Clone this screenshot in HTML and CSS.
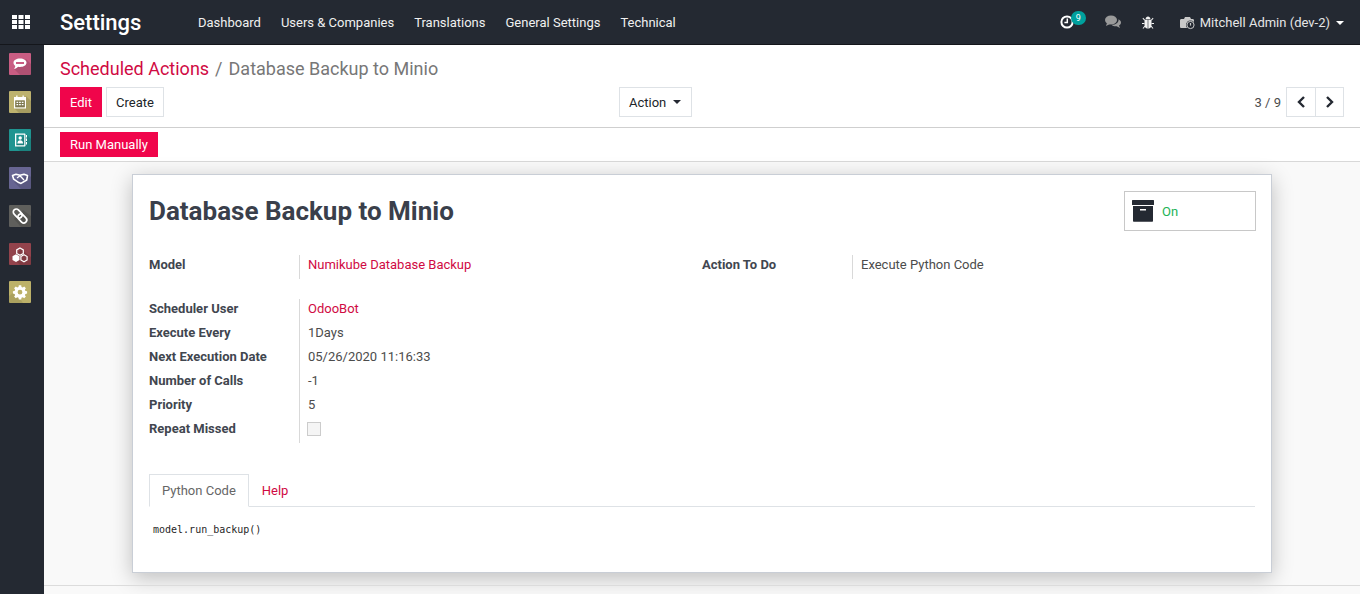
FILE: index.html
```html
<!DOCTYPE html>
<html>
<head>
	<meta charset="utf-8">
	<meta name="viewport" content="width=device-width, initial-scale=1">
	<title>Database Backup to Minio</title>
	<link rel="stylesheet" href="styles.css">
</head>
<body>
	<header class="navbar">
		<a class="apps-btn">
			<svg width="18" height="14" viewBox="0 0 18 14" fill="#fff">
				<rect x="0" y="0" width="5" height="4"/><rect x="6.500" y="0" width="5" height="4"/><rect x="13" y="0" width="5" height="4"/>
				<rect x="0" y="5" width="5" height="4"/><rect x="6.500" y="5" width="5" height="4"/><rect x="13" y="5" width="5" height="4"/>
				<rect x="0" y="10" width="5" height="4"/><rect x="6.500" y="10" width="5" height="4"/><rect x="13" y="10" width="5" height="4"/>
			</svg>
		</a>
		<span class="brand">Settings</span>
		<nav class="menu">
			<a>Dashboard</a>
			<a>Users &amp; Companies</a>
			<a>Translations</a>
			<a>General Settings</a>
			<a>Technical</a>
		</nav>
		<div class="systray">
			<span class="tray-item tray-activity">
				<svg width="14" height="14" viewBox="0 0 14 14" fill="none" stroke="#fff" stroke-width="2"><circle cx="7" cy="7" r="5.600"/><path d="M7.300 3.600V7.600H4.400" stroke-width="1.500"/></svg>
				<span class="badge">9</span>
			</span>
			<span class="tray-item tray-chat">
				<svg width="16" height="14" viewBox="0 0 16 14" fill="#9a9a9a"><ellipse cx="6" cy="5" rx="6" ry="4.600"/><path d="M2 8l-1 3 4-2z"/><path d="M13.500 4.200c1.600.8 2.500 2 2.500 3.300 0 1.300-.8 2.400-2 3.100l1 2.400-3.400-1.700c-2 .2-4-.4-5-1.500 3.800.1 7.400-2 6.900-5.600z"/></svg>
			</span>
			<span class="tray-item tray-debug">
				<svg width="12" height="13" viewBox="0 0 12 13" fill="#f2f2f2"><path d="M3.600 3.200C3.700 1.700 4.700.6 6 .6s2.300 1.100 2.400 2.600z"/><path d="M2.500 3.800h3.200v8.900C3.700 12.500 2.500 11 2.500 9zM6.300 3.800h3.200V9c0 2-1.200 3.500-3.200 3.700z"/><path d="M.5 2.500l.7-.7 1.800 2-.7.7zM11.500 2.500l-.7-.7-1.800 2 .7.7zM0 7h2.500v1H0zM9.500 7H12v1H9.500zM.6 12.200l2-2.400.7.600-2 2.400zM11.400 12.200l-2-2.400-.7.600 2 2.400z"/></svg>
			</span>
			<span class="tray-item tray-user">
				<svg width="16" height="14" viewBox="0 0 16 14"><path fill="#c9c9c9" d="M0 4.500C0 3.500.6 3 1.500 3H4l1-2h5l1 2h1.500c.9 0 1.500.5 1.500 1.500V12H1.500C.6 12 0 11.500 0 10.500z"/><circle cx="10.500" cy="9" r="4.500" fill="#242932"/><circle cx="10.500" cy="9" r="3.600" fill="none" stroke="#c9c9c9"/><path d="M10.500 7v2.600" stroke="#c9c9c9" stroke-width="1.200"/></svg>
				Mitchell Admin (dev-2)
				<i class="caret caret-light"></i>
			</span>
		</div>
	</header>

	<div class="body-wrap">
		<aside class="sidebar">
			<a class="app-icon app-pink">
				<svg viewBox="0 0 22 22"><path class="shade" d="M5 16l12-10 5 5v11H11z"/><path class="glyph" d="M11 5.500c3.600 0 6.500 1.800 6.500 4.200S14.600 13.900 11 13.900c-.7 0-1.300-.1-1.900-.2C8 14.800 6.500 15.700 5 15.800c.8-.8 1.200-1.800 1.300-2.900-1.100-.8-1.800-2-1.800-3.200C4.500 7.300 7.400 5.500 11 5.500z"/><rect x="7" y="9" width="8" height="2" fill="#c95d83"/></svg>
			</a>
			<a class="app-icon app-khaki">
				<svg viewBox="0 0 22 22"><path class="shade" d="M5 17L17 5l5 5v12H10z"/><path class="glyph" d="M5 6h2.200V4.500h1.300V6h5V4.500h1.300V6H17v11.500H5zM6.300 9.500v6.700h9.400V9.500z"/><rect x="6.300" y="9.500" width="9.400" height="6.700" fill="#7d7750"/><path class="glyph" d="M7.500 10.700h1.700v1.300H7.500zM10.100 10.700h1.700v1.300h-1.700zM12.800 10.700h1.700v1.300h-1.700zM7.500 13h1.700v1.300H7.500zM10.100 13h1.700v1.300h-1.700zM12.800 13h1.700v1.300h-1.700z"/></svg>
			</a>
			<a class="app-icon app-teal">
				<svg viewBox="0 0 22 22"><path class="shade" d="M6 17L17 5l5 5v12H11z"/><path class="glyph" d="M6 4.500h9.500c.6 0 1 .4 1 1v11c0 .6-.4 1-1 1H6zM7.300 5.800v10.400h7.900V5.800z"/><path class="glyph" d="M17 6h1v2.500h-1zM17 9.500h1V12h-1zM17 13h1v2.500h-1z"/><circle class="glyph" cx="11.200" cy="9" r="1.700"/><path class="glyph" d="M8.400 14.500c0-2 1.200-3.200 2.800-3.200s2.800 1.200 2.800 3.200z"/></svg>
			</a>
			<a class="app-icon app-purple">
				<svg viewBox="0 0 22 22"><path class="shade" d="M5 15l14-8 3 3v12H12z"/><g fill="none" stroke="#fff" stroke-width="1.600" stroke-linejoin="round"><path d="M3.500 8.500L7 7.300l4 1 4-1 3.500 1.200-.8 4.500-5.700 3.400-2.300-.8-5-3.400z"/><path d="M8 11l3-2.200 4 4.200" stroke-width="1.300"/></g></svg>
			</a>
			<a class="app-icon app-grey">
				<svg viewBox="0 0 22 22"><path class="shade" d="M5 14l9-9 8 6v11H12z"/><g fill="none" stroke="#fff" stroke-width="1.700"><rect x="3.700" y="5.500" width="10" height="6" rx="3" transform="rotate(45 8.700 8.500)"/><rect x="8.300" y="10.500" width="10" height="6" rx="3" transform="rotate(45 13.300 13.500)"/></g></svg>
			</a>
			<a class="app-icon app-red">
				<svg viewBox="0 0 22 22"><path class="shade" d="M4 15l8-9 10 8v8H11z"/><path d="M11 5l3.300 1.900v3.500L11 12.300 7.700 10.400V6.900z" fill="none" stroke="#fff" stroke-width="1.200"/><path class="glyph" d="M7 11.300l3.500 2v3.700L7 19l-3.500-2v-3.700z"/><path d="M15 11.800l3.100 1.800v3.300L15 18.700l-3.100-1.800v-3.300z" fill="none" stroke="#fff" stroke-width="1.200"/></svg>
			</a>
			<a class="app-icon app-olive">
				<svg viewBox="0 0 22 22"><path class="shade" d="M0 22V15L6 10l8 12z" opacity=".7"/><path class="glyph" fill-rule="evenodd" d="M9.800 4.800h2.400l.3 1.700 1.300.5 1.400-1 1.700 1.700-1 1.400.5 1.300 1.700.3v2.400l-1.700.3-.5 1.300 1 1.400-1.700 1.700-1.400-1-1.300.5-.3 1.700H9.800l-.3-1.700-1.300-.5-1.400 1-1.700-1.700 1-1.400-.5-1.300-1.700-.3v-2.400l1.700-.3.5-1.300-1-1.400 1.700-1.700 1.400 1 1.300-.5zM11 9.300a2.400 2.400 0 1 0 0 4.800 2.400 2.400 0 0 0 0-4.800z" transform="translate(0 -.5)"/></svg>
			</a>
		</aside>

		<main class="content">
			<section class="control-panel">
				<div class="breadcrumb">
					<a>Scheduled Actions</a><span class="crumb-sep">/</span><span class="crumb-current">Database Backup to Minio</span>
				</div>
				<div class="cp-row">
					<div class="cp-buttons">
						<button class="btn btn-primary">Edit</button>
						<button class="btn btn-light">Create</button>
					</div>
					<div class="cp-action">
						<button class="btn btn-light btn-action">Action <i class="caret caret-dark"></i></button>
					</div>
					<div class="cp-pager">
						<span class="pager-value">3 / 9</span>
						<div class="pager-btns">
							<button class="btn btn-light btn-pager"><svg width="10" height="12" viewBox="0 0 10 12"><path d="M8 1L3 6l5 5" fill="none" stroke="#242932" stroke-width="2.400"/></svg></button>
							<button class="btn btn-light btn-pager"><svg width="10" height="12" viewBox="0 0 10 12"><path d="M2 1l5 5-5 5" fill="none" stroke="#242932" stroke-width="2.400"/></svg></button>
						</div>
					</div>
				</div>
			</section>

			<div class="statusbar">
				<button class="btn btn-primary btn-small">Run Manually</button>
			</div>

			<div class="form-view">
				<div class="sheet">
					<div class="sheet-top">
						<h1 class="title">Database Backup to Minio</h1>
						<button class="toggle-btn">
							<svg width="22" height="22" viewBox="0 0 22 22" fill="#242932"><rect x="0" y="0" width="22" height="5" rx=".5"/><path d="M1 6h20v15a.7.7 0 0 1-.7.7H1.700A.7.7 0 0 1 1 21zM8 9v1.500h6V9z" fill-rule="evenodd"/></svg>
							<span class="toggle-label">On</span>
						</button>
					</div>

					<div class="field-cols">
						<div class="field-group">
							<div class="lbl">Model</div>
							<div class="val"><a>Numikube Database Backup</a></div>
						</div>
						<div class="field-group">
							<div class="lbl">Action To Do</div>
							<div class="val">Execute Python Code</div>
						</div>
					</div>

					<div class="field-group group-schedule">
						<div class="lbl">Scheduler User</div>
						<div class="val"><a>OdooBot</a></div>
						<div class="lbl">Execute Every</div>
						<div class="val">1Days</div>
						<div class="lbl">Next Execution Date</div>
						<div class="val">05/26/2020 11:16:33</div>
						<div class="lbl">Number of Calls</div>
						<div class="val">-1</div>
						<div class="lbl">Priority</div>
						<div class="val">5</div>
						<div class="lbl">Repeat Missed</div>
						<div class="val"><span class="check"></span></div>
					</div>

					<div class="tabs">
						<a class="tab tab-active">Python Code</a>
						<a class="tab">Help</a>
					</div>
					<pre class="code">model.run_backup()</pre>
				</div>
				<div class="chatter-line"></div>
			</div>
		</main>
	</div>
</body>
</html>
```

FILE: styles.css
```css
* { box-sizing: border-box; }
html, body { height: 100%; }
body {
	margin: 0;
	overflow: hidden;
	display: flex;
	flex-direction: column;
	font-family: Roboto, "Liberation Sans", sans-serif;
	font-size: 13px;
	line-height: 19.5px;
	color: #4c4c4c;
	background: #fff;
}
a { color: #d00a43; text-decoration: none; }

/* top bar */
.navbar {
	flex: none;
	height: 45px;
	display: flex;
	align-items: center;
	background: #242932;
	border-bottom: 1px solid #14161b;
	color: #fff;
}
.apps-btn {
	width: 42px;
	display: flex;
	justify-content: center;
	margin-right: 2px;
}
.brand {
	margin-left: 16px;
	width: 128px;
	padding-top: 2px;
	font-size: 22px;
	font-weight: 500;
	color: #fff;
}
.menu { display: flex; gap: 20px; margin-left: 10px; padding-top: 2px; }
.menu a { color: #f0f0f0; }
.systray {
	margin-left: auto;
	display: flex;
	align-items: center;
	padding-right: 16px;
}
.tray-item { display: flex; align-items: center; color: #e6e6e6; }
.tray-activity { position: relative; width: 14px; margin-right: 31px; }
.badge {
	position: absolute;
	left: 11px;
	top: -4px;
	width: 15px;
	height: 14px;
	border-radius: 7px;
	background: #00a09d;
	color: #fff;
	font-size: 9px;
	line-height: 14px;
	text-align: center;
}
.tray-chat { margin-right: 21px; }
.tray-debug { margin-right: 26px; }
.tray-user { padding-top: 2px; }
.tray-user svg { margin-right: 4px; }

.caret {
	display: inline-block;
	width: 0;
	height: 0;
	border-left: 4px solid transparent;
	border-right: 4px solid transparent;
	border-top: 4px solid #fff;
}
.caret-light { margin-left: 6px; margin-top: -1px; }
.caret-dark { border-top-color: #242932; margin-left: 3px; vertical-align: 3px; }

/* left app column */
.body-wrap { flex: 1; min-height: 0; display: flex; }
.sidebar {
	flex: none;
	width: 44px;
	background: #242932;
	display: flex;
	flex-direction: column;
	align-items: flex-start;
	gap: 16px;
	padding: 8px 0 0 9px;
}
.app-icon { display: block; width: 22px; height: 22px; border-radius: 1px; overflow: hidden; }
.app-icon svg { display: block; width: 22px; height: 22px; }
.glyph { fill: #fff; }
.shade { fill: rgba(0, 0, 0, .12); }
.app-pink { background: #c95d83; }
.app-khaki { background: #bdb26e; }
.app-teal { background: #1f9490; }
.app-purple { background: #676592; }
.app-grey { background: #5f5f5c; }
.app-red { background: #93434c; }
.app-olive { background: #bcb169; }

/* main */
.content { flex: 1; min-width: 0; display: flex; flex-direction: column; }
.control-panel {
	flex: none;
	height: 83px;
	padding: 10px 16px 0;
	border-bottom: 1px solid #cfcfcf;
}
.breadcrumb { font-size: 18px; line-height: 27px; height: 32px; color: #777; }
.crumb-sep { margin: 0 6px; color: #777; }
.cp-row { display: flex; align-items: flex-start; }
.cp-buttons { display: flex; gap: 4px; width: 559px; }
.cp-action { width: 440px; }
.cp-pager { margin-left: auto; display: flex; align-items: center; height: 30px; gap: 5px; }
.pager-value { padding-top: 2px; }
.pager-btns { display: flex; }

.btn {
	height: 30px;
	padding: 2px 9px 0;
	border: 1px solid #dee2e6;
	border-radius: 0;
	font: inherit;
	color: #212529;
	background: #fff;
}
.btn-primary { background: #f0054b; border-color: #f0054b; color: #fff; }
.btn-action { padding-right: 10px; }
.btn-small { height: 25px; padding-top: 0; line-height: 23px; }
.btn-pager { width: 30px; padding: 0; display: flex; align-items: center; justify-content: center; }
.btn-pager + .btn-pager { margin-left: -1px; width: 29px; }

.statusbar {
	flex: none;
	height: 34px;
	padding: 4px 16px 0;
	border-bottom: 1px solid #d8d8d8;
}

.form-view {
	flex: 1;
	min-height: 0;
	background: #f9f9f9;
	padding: 12px 88px 0;
}
.sheet {
	height: 399px;
	background: #fff;
	border: 1px solid #c9ced6;
	padding: 0 16px;
	box-shadow: 0 5px 20px 0 rgba(0, 0, 0, .24);
}
.sheet-top {
	display: flex;
	justify-content: space-between;
	height: 80px;
	padding-top: 16px;
}
.title {
	margin: 0;
	padding-top: 1px;
	font-size: 26px;
	line-height: 39px;
	font-weight: 700;
	color: #3a3f4b;
}
.toggle-btn {
	width: 132px;
	height: 40px;
	display: flex;
	align-items: center;
	gap: 8px;
	padding: 0 7px;
	background: #fff;
	border: 1px solid #c8c8c8;
	font: inherit;
	color: #21b356;
	margin-right: -1px;
}
.toggle-label { padding-top: 2px; }

.field-cols { display: grid; grid-template-columns: 553px 1fr; height: 44px; }
.field-group {
	display: grid;
	grid-template-columns: 150px 1fr;
	grid-auto-rows: 24px;
	align-items: start;
}
.lbl { font-weight: 700; color: #41464f; height: 24px; }
.val { border-left: 1px solid #d9d9d9; padding-left: 8px; height: 24px; }
.group-schedule { height: 175px; }
.check {
	display: block;
	margin: 3px 0 0 -1px;
	width: 14px;
	height: 14px;
	background: #f5f5f5;
	border: 1px solid #ccc;
}

.tabs {
	display: flex;
	height: 33px;
	border-bottom: 1px solid #dee2e6;
}
.tab { padding: 7px 13px 0; height: 33px; }
.tab-active {
	padding: 6px 12px 0;
	background: #fff;
	color: #666;
	border: 1px solid #dee2e6;
	border-bottom-color: #fff;
}
.code {
	margin: 0;
	padding: 13px 4px 0;
	font-family: "DejaVu Sans Mono", monospace;
	font-size: 10px;
	line-height: 20px;
	color: #1f1f1f;
}
.chatter-line { margin: 12px -88px 0; border-top: 1px solid #dcdcdc; }
```
